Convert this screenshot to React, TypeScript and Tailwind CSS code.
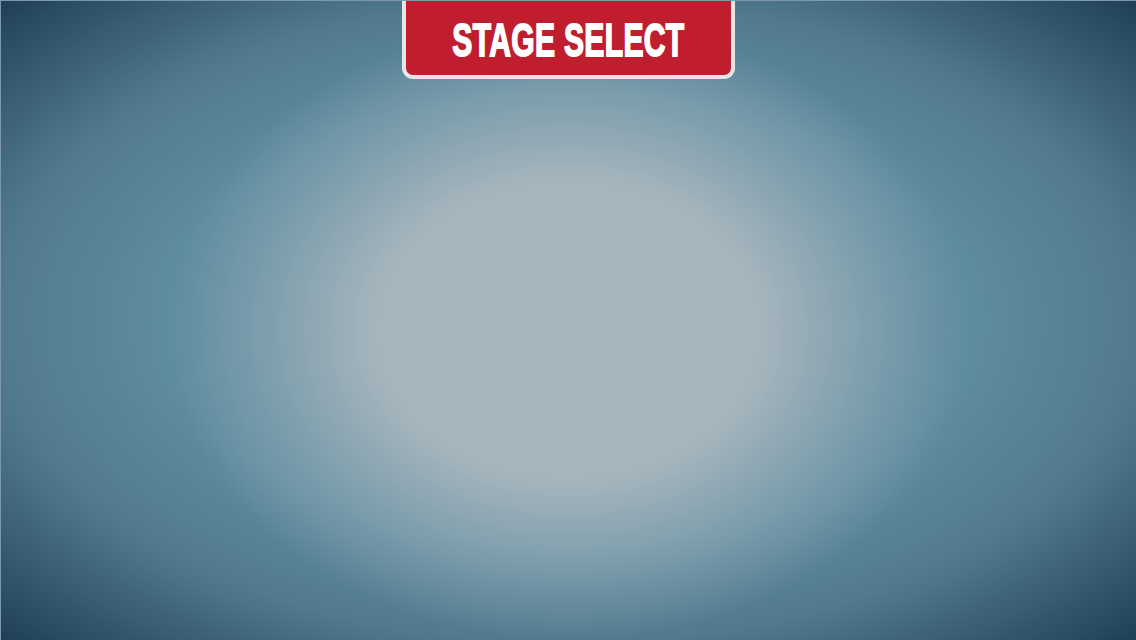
import React from "react";

export default function App() {
  return (
    <div className="relative w-[1136px] h-[640px] overflow-hidden border-l border-t border-[#7d98a6] [background-image:radial-gradient(ellipse_400px_310px_at_50%_51.5%,rgba(167,182,190,1)_0%,rgba(166,181,189,1)_48%,rgba(166,181,189,0.45)_75%,rgba(166,181,189,0)_100%),radial-gradient(ellipse_at_50%_50%,#6190a4_0%,#5e8ca0_50%,#527a8e_71%,#1f3f58_100%)] flex flex-col items-center">
      <div className="w-[333px] h-[79px] -mt-px bg-[#c01e2e] border-4 border-t-0 border-[#e6e6e6] rounded-b-[11px] flex items-center justify-center">
        <span
          className="inline-block mt-[4px] whitespace-nowrap text-white font-bold leading-none text-[47px] scale-x-[0.64] [-webkit-text-stroke:1.8px_white] tracking-[0.5px]"
          style={{ fontFamily: '"Liberation Sans", Arial, sans-serif' }}
        >
          STAGE SELECT
        </span>
      </div>
    </div>
  );
}
